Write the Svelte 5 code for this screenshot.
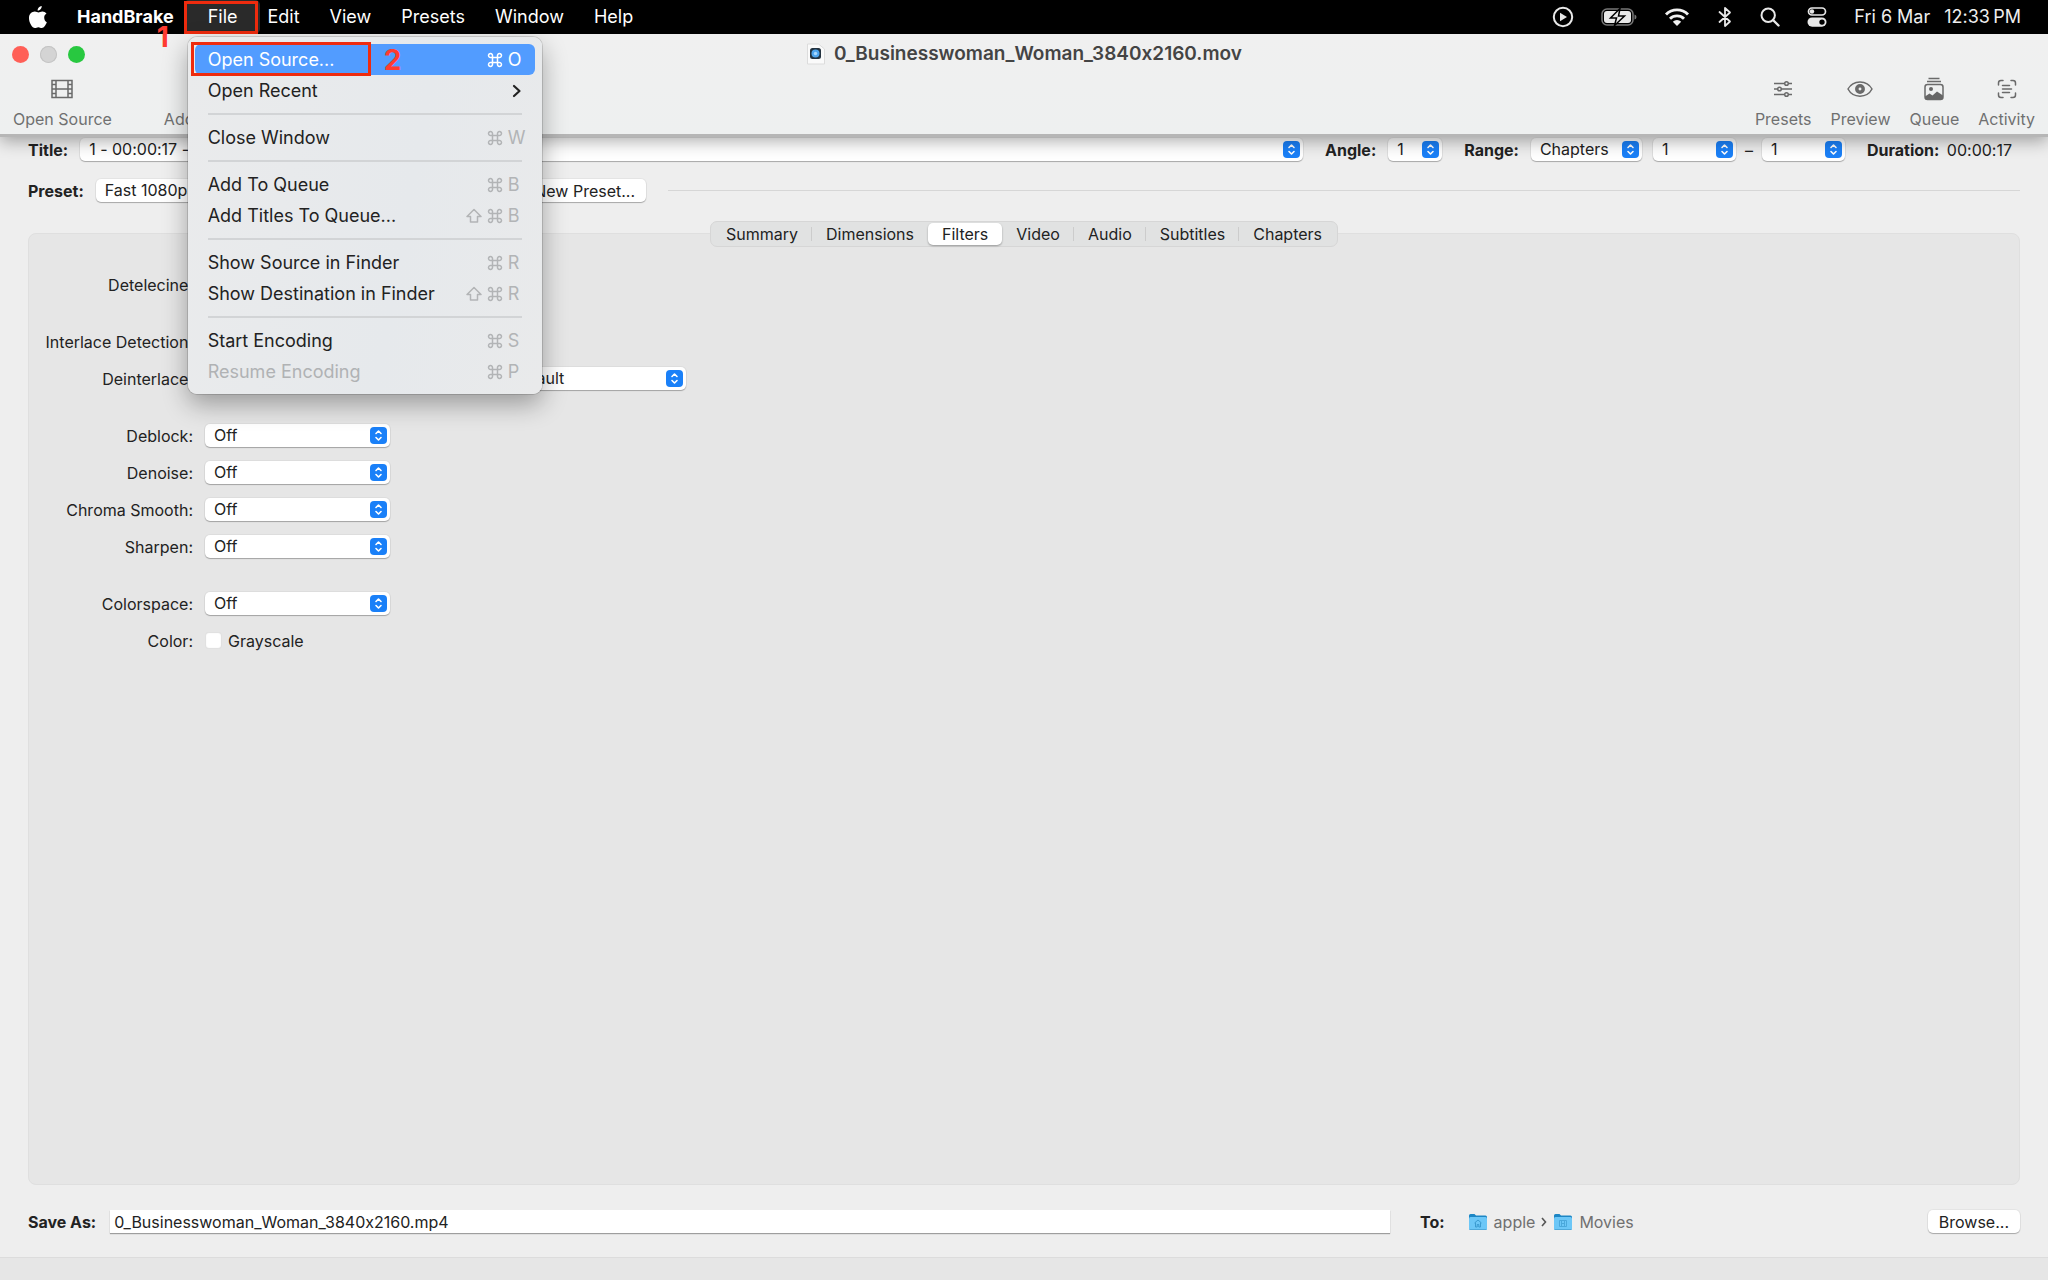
<script>
	const menus = ['Edit', 'View', 'Presets', 'Window', 'Help'];

	const fileMenu = [
		[
			{ label: 'Open Source...', key: 'O', active: true },
			{ label: 'Open Recent', submenu: true }
		],
		[{ label: 'Close Window', key: 'W' }],
		[
			{ label: 'Add To Queue', key: 'B' },
			{ label: 'Add Titles To Queue...', key: 'B', shift: true }
		],
		[
			{ label: 'Show Source in Finder', key: 'R' },
			{ label: 'Show Destination in Finder', key: 'R', shift: true }
		],
		[
			{ label: 'Start Encoding', key: 'S' },
			{ label: 'Resume Encoding', key: 'P', disabled: true }
		]
	];

	const filterGroups = [
		[{ id: 'detelecine', label: 'Detelecine:', value: 'Off' }],
		[
			{ id: 'interlace', label: 'Interlace Detection:', value: 'Off' },
			{ id: 'deinterlace', label: 'Deinterlace:', value: 'Yadif', preset: 'Default' }
		],
		[
			{ id: 'deblock', label: 'Deblock:', value: 'Off' },
			{ id: 'denoise', label: 'Denoise:', value: 'Off' },
			{ id: 'chroma', label: 'Chroma Smooth:', value: 'Off' },
			{ id: 'sharpen', label: 'Sharpen:', value: 'Off' }
		],
		[{ id: 'colorspace', label: 'Colorspace:', value: 'Off' }]
	];

	const tabs = ['Summary', 'Dimensions', 'Filters', 'Video', 'Audio', 'Subtitles', 'Chapters'];
	let activeTab = $state('Filters');
	let fileName = $state('0_Businesswoman_Woman_3840x2160.mp4');
	let grayscale = $state(false);
</script>

{#snippet command()}
	<svg class="glyph" viewBox="0 0 16 16" width="16" height="16">
		<path d="M5.5 5.5h5v5h-5zM5.5 5.5H3.7A2 2 0 1 1 5.5 3.7zM10.5 5.5V3.7a2 2 0 1 1 1.8 1.8zM10.5 10.5h1.8a2 2 0 1 1-1.8 1.8zM5.5 10.5v1.8a2 2 0 1 1-1.8-1.8z" />
	</svg>
{/snippet}

{#snippet folder(kind)}
	<svg width="20" height="18" viewBox="0 0 20 18">
		<path d="M1 2.5Q1 1 2.500 1H6.500L8 2.500H17.500Q19 2.500 19 4V8H1z" fill="#1d86c4" />
		<rect x="1" y="4" width="18" height="13" rx="1.500" fill="#6cc7f7" />
		<path d="M1.500 16.500h17" stroke="#4fa9da" />
		{#if kind === 'home'}
			<path d="M6.500 10L10 7l3.500 3M7.500 9.500V14h1.700v-2.500h1.600V14h1.700V9.500" fill="none" stroke="#3b9bd0" />
		{:else}
			<path d="M6.500 7.500h7v6h-7zM8.500 7.500v6M11.500 7.500v6M8.500 10.500h3" fill="none" stroke="#4aa8db" />
		{/if}
	</svg>
{/snippet}

<div class="screen">
	<nav class="menubar">
		<svg class="apple" width="20" height="24" viewBox="0 0 20 24">
			<path d="M13.700 1c.2 2.400-1.800 4.700-4 4.700C9.400 3.500 11.500 1.200 13.700 1zM16.200 12.600c0-2.100 1.200-3.300 2.300-4-1-1.500-2.600-2.100-4-2.200-1.700-.1-3.100 1-4 1-.8 0-2.200-.9-3.600-.9C3.700 6.600 1 8.900 1 13.200 1 17.800 4.200 23 6.900 23c1.300 0 1.900-.8 3.500-.8 1.500 0 2 .8 3.400.8 2.300 0 4.200-3.400 5-5.700-1.600-.7-2.600-2.400-2.600-4.700z" fill="#fff" />
		</svg>
		<button class="app-name">HandBrake</button>
		<div class="file">
			<button class="file-button">File</button>
			<div class="callout callout-file"></div>
			<span class="step step-one">1</span>

			<div class="dropdown" role="menu">
				{#each fileMenu as group, i}
					{#if i > 0}<hr />{/if}
					{#each group as item}
						<button class="item" class:active={item.active} disabled={item.disabled} role="menuitem">
							<span>{item.label}</span>
							{#if item.submenu}
								<svg class="chevron" width="10" height="14" viewBox="0 0 10 14">
									<path d="M2 2l5.500 5L2 12" fill="none" stroke="#222" stroke-width="2.200" stroke-linecap="round" stroke-linejoin="round" />
								</svg>
							{:else}
								<span class="keys">
									{#if item.shift}
										<svg class="glyph" viewBox="0 0 16 16" width="16" height="16">
											<path d="M8 1.500l7 7h-3.500V14h-7V8.500H1z" />
										</svg>
									{/if}
									{@render command()}
									<span class="letter">{item.key}</span>
								</span>
							{/if}
						</button>
					{/each}
				{/each}
				<div class="callout callout-open"></div>
				<span class="step step-two">2</span>
			</div>
		</div>
		{#each menus as menu}
			<button>{menu}</button>
		{/each}

		<div class="status">
			<svg width="22" height="22" viewBox="0 0 22 22">
				<circle cx="11" cy="11" r="9.200" fill="none" stroke="#e8e8e8" stroke-width="2" />
				<path d="M8 6.800v8.400l7-4.200z" fill="#e8e8e8" />
			</svg>
			<svg width="36" height="20" viewBox="0 0 36 20">
				<rect x="1" y="2" width="31" height="16" rx="5" fill="none" stroke="#777" stroke-width="1.500" />
				<rect x="3" y="4" width="27" height="12" rx="3" fill="#e8e8e8" />
				<path d="M33.500 7.500q2 .5 2 2.500t-2 2.500z" fill="#777" />
				<path d="M19 1.500L9.500 11h6L13.500 18.500 23.500 9h-6z" fill="#e8e8e8" stroke="#000" stroke-width="1.500" />
			</svg>
			<svg width="26" height="20" viewBox="0 0 26 20">
				<path d="M2 7.500a15.500 15.500 0 0 1 22 0M6 11.700a10 10 0 0 1 14 0" fill="none" stroke="#f0f0f0" stroke-width="2.900" />
				<path d="M8.800 14.700a6 6 0 0 1 8.400 0L13 19z" fill="#f0f0f0" />
			</svg>
			<svg width="16" height="22" viewBox="0 0 16 22">
				<path d="M2.500 6L13 15.500 8 20V2l5 4.500L2.500 16" fill="none" stroke="#e8e8e8" stroke-width="1.800" stroke-linejoin="round" stroke-linecap="round" />
			</svg>
			<svg width="20" height="20" viewBox="0 0 20 20">
				<circle cx="8.200" cy="8.200" r="6.700" fill="none" stroke="#e8e8e8" stroke-width="2" />
				<path d="M13 13l5.500 5.500" stroke="#e8e8e8" stroke-width="2.400" stroke-linecap="round" />
			</svg>
			<svg width="20" height="20" viewBox="0 0 20 20">
				<rect x="1.500" y="1" width="17" height="7" rx="3.500" fill="none" stroke="#e8e8e8" stroke-width="1.700" />
				<circle cx="5" cy="4.500" r="2.200" fill="#e8e8e8" />
				<rect x="0.500" y="10.500" width="19" height="9.200" rx="4.600" fill="#e8e8e8" />
				<circle cx="15" cy="15.100" r="2.700" fill="#000" />
			</svg>
			<time><span>Fri 6 Mar</span><span>12:33&thinsp;PM</span></time>
		</div>
	</nav>

	<header class="window-bar">
		<div class="titlebar">
			<div class="lights">
				<button class="light close" aria-label="Close"></button>
				<button class="light minimize" aria-label="Minimize"></button>
				<button class="light zoom" aria-label="Zoom"></button>
			</div>
			<h1>
				<svg width="20" height="22" viewBox="0 0 20 22">
					<path d="M1.500 1h11L18.500 6v15h-17z" fill="#fafafa" stroke="#dcdcdc" />
					<rect x="4" y="5" width="11" height="11" rx="2.500" fill="#23323f" />
					<circle cx="9.500" cy="10.500" r="4" fill="#4ea5ee" />
					<circle cx="9.500" cy="10.500" r="1.700" fill="#a7d8ff" />
				</svg>
				0_Businesswoman_Woman_3840x2160.mov
			</h1>
		</div>
		<div class="toolbar">
			<button class="tool">
				<svg width="22" height="20" viewBox="0 0 22 20">
					<path d="M1 1.500h20v17H1zM5 1.500v17M17 1.500v17M5 10h12M1 5.500h4M1 10h4M1 14.500h4M17 5.500h4M17 10h4M17 14.500h4" />
				</svg>
				Open Source
			</button>
			<button class="tool add">
				<svg width="22" height="20" viewBox="0 0 22 20"><path d="M2 3h18v14H2zM11 6v8M7 10h8" /></svg>
				Add To Queue
			</button>
			<div class="tools">
				<button class="tool">
					<svg width="20" height="20" viewBox="0 0 20 20">
						<path d="M1 4.500h10.500M15.500 4.500H19M1 10h3.500M8.500 10H19M1 15.500h10.500M15.500 15.500H19" stroke-width="1.600" />
						<circle cx="13.500" cy="4.500" r="1.800" /><circle cx="6.500" cy="10" r="1.800" /><circle cx="13.500" cy="15.500" r="1.800" />
					</svg>
					Presets
				</button>
				<button class="tool">
					<svg width="26" height="20" viewBox="0 0 26 20">
						<path d="M1 10C6 .5 20 .5 25 10 20 19.500 6 19.500 1 10z" />
						<circle class="pupil" cx="13" cy="10" r="3.200" />
					</svg>
					Preview
				</button>
				<button class="tool">
					<svg width="22" height="24" viewBox="0 0 22 24">
						<path d="M5.500 1.500h11M4 4.500h14" />
						<rect x="2" y="7.500" width="18" height="15" rx="2.500" />
						<circle class="solid" cx="8" cy="12" r="2" />
						<path class="solid" d="M2 19.500l4.500-3 3 2 4.500-4 6 4V21q0 1.500-2 1.500H4q-2 0-2-1.500z" />
					</svg>
					Queue
				</button>
				<button class="tool">
					<svg width="20" height="20" viewBox="0 0 20 20">
						<path d="M1.500 6V4Q1.500 1.500 4 1.500h2M14 1.500h2q2.500 0 2.500 2.500v2M18.500 14v2q0 2.500-2.500 2.500h-2M6 18.500H4Q1.500 18.500 1.500 16v-2M5.500 6.500h7M5.500 10h9M5.500 13.500h7" stroke-linecap="round" />
					</svg>
					Activity
				</button>
			</div>
		</div>
	</header>

	<main>
		<div class="row source">
			<label for="title">Title:</label>
			<select id="title" class="grow"><option>1 - 00:00:17 - 0_Businesswoman</option></select>
			<label class="spaced" for="angle">Angle:</label>
			<select id="angle" class="angle"><option>1</option></select>
			<label class="spaced" for="range">Range:</label>
			<select id="range" class="range"><option>Chapters</option></select>
			<select class="chapter" aria-label="First chapter"><option>1</option></select>
			<span class="dash">–</span>
			<select class="chapter" aria-label="Last chapter"><option>1</option></select>
			<p class="duration"><b>Duration:</b> 00:00:17</p>
		</div>

		<div class="row preset">
			<label for="preset">Preset:</label>
			<select id="preset" class="preset-select"><option>Fast 1080p30</option></select>
			<button class="push">Save New Preset...</button>
			<hr />
		</div>

		<div class="tabs" role="tablist">
			{#each tabs as tab}
				<button
					role="tab"
					class:selected={tab === activeTab}
					aria-selected={tab === activeTab}
					onclick={() => (activeTab = tab)}>{tab}</button
				>
			{/each}
		</div>

		<section class="panel">
			{#each filterGroups as group}
				<div class="group">
					{#each group as filter}
						<div class="filter">
							<label for={filter.id}>{filter.label}</label>
							<select id={filter.id}><option>{filter.value}</option></select>
							{#if filter.preset}
								<span class="sub">Preset:</span>
								<select aria-label="Deinterlace preset"><option>{filter.preset}</option></select>
							{/if}
						</div>
					{/each}
					{#if group[0].id === 'colorspace'}
						<div class="filter">
							<span>Color:</span>
							<label class="check"><input type="checkbox" bind:checked={grayscale} />Grayscale</label>
						</div>
					{/if}
				</div>
			{/each}
		</section>

		<div class="row save">
			<label for="save">Save As:</label>
			<input id="save" type="text" bind:value={fileName} />
			<div class="destination">
				<b>To:</b>
				<span class="path">
					{@render folder('home')}
					<span>apple</span>
					<svg width="6" height="10" viewBox="0 0 6 10"><path d="M1 1l3.500 4L1 9" fill="none" stroke="#555" stroke-width="1.600" /></svg>
					{@render folder('movies')}
					<span>Movies</span>
				</span>
				<button class="push">Browse...</button>
			</div>
		</div>
	</main>
	<footer></footer>
</div>

<style>
	:global(body) {
		margin: 0;
	}

	.screen {
		display: flex;
		flex-direction: column;
		min-height: 100vh;
		background: #eee;
		color: #222;
		font-family: Inter, 'Liberation Sans', sans-serif;
		font-size: 16px;
		/* keeps 3840x2160 from turning into a multiplication sign */
		font-feature-settings: 'calt' 0;
		line-height: 20px;
	}

	button,
	input,
	select {
		margin: 0;
		padding: 0;
		border: none;
		background: none;
		color: inherit;
		font: inherit;
		font-feature-settings: inherit;
	}
	button {
		white-space: nowrap;
	}
	svg {
		display: block;
		flex: none;
	}

	/* menu bar */
	.menubar {
		position: relative;
		z-index: 3;
		display: flex;
		align-items: center;
		height: 34px;
		padding: 0 27px 0 28px;
		background: #000;
		color: #fff;
		font-size: 18px;
	}
	.menubar > button {
		padding: 0 15px;
	}
	.menubar > .app-name {
		padding: 0 10px 0 29px;
		font-weight: 700;
	}
	.file {
		position: relative;
		height: 34px;
		margin-right: -7px;
	}
	.file-button {
		height: 34px;
		padding: 0 22px 0 24px;
		border-radius: 5px;
		background: #2a2a2a;
	}
	.callout {
		position: absolute;
		box-sizing: border-box;
		border: 3px solid #ee2b0e;
		pointer-events: none;
	}
	.callout-file {
		inset: 1px 2px 0 0;
	}
	.callout-open {
		top: 5px;
		left: 3px;
		width: 180px;
		height: 34px;
	}
	.step {
		position: absolute;
		color: #ff3b30;
		font-size: 28px;
		font-weight: 700;
		line-height: 28px;
	}
	.step-one {
		top: 23px;
		left: -27px;
	}
	.step-two {
		top: 9px;
		left: 196px;
	}

	.status {
		display: flex;
		align-items: center;
		gap: 27px;
		margin-left: auto;
		color: #eee;
	}
	.status time {
		display: flex;
		gap: 14px;
		white-space: nowrap;
	}

	.dropdown {
		position: absolute;
		top: 37px;
		left: 4px;
		box-sizing: border-box;
		width: 354px;
		padding: 7px;
		border-radius: 9px;
		background: linear-gradient(100deg, #eaebec, #e6e9ec 60%, #e9eaeb);
		box-shadow:
			0 0 0 1px #0002,
			0 10px 26px #0005;
		color: #222;
	}
	.dropdown hr {
		height: 2px;
		margin: 7px 13px;
		border: none;
		background: #d2d4d6;
	}
	.item {
		display: flex;
		align-items: center;
		justify-content: space-between;
		box-sizing: border-box;
		width: 100%;
		height: 31px;
		padding: 0 10px 0 13px;
		border-radius: 6px;
	}
	.item.active {
		background: #529cff;
		color: #fff;
	}
	.item:disabled {
		color: #b0b2b4;
	}
	.chevron {
		margin-right: 3px;
	}
	.keys {
		display: flex;
		align-items: center;
		gap: 5px;
		color: #b2b4b6;
	}
	.active .keys {
		color: #fff;
	}
	.letter {
		width: 17px;
		text-align: left;
	}
	.glyph {
		fill: none;
		stroke: currentColor;
		stroke-width: 1.5px;
		stroke-linejoin: round;
	}

	/* window chrome */
	.window-bar {
		position: relative;
		z-index: 2;
		height: 100px;
		border-bottom: 3px solid #b6b6b6;
		background: linear-gradient(#f0f0f0, #eef0f0);
		box-shadow: 0 4px 16px #0005;
	}
	.titlebar {
		display: grid;
		grid-template-columns: 1fr auto 1fr;
		align-items: center;
		height: 40px;
		padding: 0 12px;
	}
	.lights {
		display: flex;
		gap: 11px;
	}
	.light {
		width: 17px;
		height: 17px;
		border-radius: 50%;
	}
	.close {
		background: #ff5f57;
	}
	.minimize {
		background: #d4d4d4;
		box-shadow: inset 0 0 0 1px #c4c4c4;
	}
	.zoom {
		background: #28c840;
	}
	h1 {
		display: flex;
		align-items: center;
		gap: 8px;
		margin: 0;
		color: #444;
		font-size: 19px;
		font-weight: 600;
	}
	.toolbar {
		display: flex;
		height: 60px;
		padding: 0 13px;
		color: #707070;
	}
	.tool {
		display: grid;
		grid-template-rows: 30px 30px;
		place-items: center;
	}
	.tool svg {
		fill: none;
		stroke: #6a6a6a;
		stroke-width: 1.5px;
	}
	.tool .solid {
		fill: #666;
		stroke: none;
	}
	.tool .pupil {
		stroke-width: 3.5px;
	}
	.add {
		margin-left: 52px;
	}
	.tools {
		display: flex;
		gap: 19px;
		margin-left: auto;
	}

	/* window content */
	main {
		display: flex;
		flex: 1;
		flex-direction: column;
		padding: 0 28px;
	}
	.row {
		display: flex;
		align-items: center;
	}
	.row label,
	b {
		font-weight: 700;
	}

	select {
		box-sizing: border-box;
		width: 185px;
		height: 23px;
		padding: 0 24px 0 9px;
		border-radius: 5px;
		appearance: none;
		background: #fff
			url("data:image/svg+xml,%3Csvg xmlns='http://www.w3.org/2000/svg' width='17' height='17'%3E%3Crect width='17' height='17' rx='4' fill='%231a80f8'/%3E%3Cpath d='M6 6.500l2.500-2.500 2.500 2.500M6 10.500l2.500 2.500 2.500-2.500' fill='none' stroke='white' stroke-width='1.600' stroke-linecap='round' stroke-linejoin='round'/%3E%3C/svg%3E")
			no-repeat right 3px center;
		box-shadow:
			0 0 0 1px #0000000a,
			0 1px 1px #0004;
		line-height: 23px;
	}
	.push {
		box-sizing: border-box;
		height: 23px;
		padding: 0 11px;
		border-radius: 5px;
		background: #fff;
		box-shadow:
			0 0 0 1px #0000000a,
			0 1px 1px #0004;
	}

	.source {
		padding-top: 1px;
	}
	.source .grow {
		flex: 1;
		margin-left: 12px;
	}
	.spaced {
		margin-left: 22px;
	}
	.source .angle {
		width: 54px;
		margin-left: 12px;
	}
	.source .range {
		width: 111px;
		margin: 0 11px 0 12px;
	}
	.source .chapter {
		width: 83px;
	}
	.dash {
		width: 26px;
		text-align: center;
	}
	.duration {
		margin: 0 8px 0 22px;
	}
	.duration b {
		margin-right: 3px;
	}

	.preset {
		margin-top: 18px;
	}
	.preset .preset-select {
		width: 366px;
		margin: 0 20px 0 12px;
	}
	.preset hr {
		flex: 1;
		height: 1px;
		margin: 0 0 0 22px;
		border: none;
		background: #d6d6d6;
	}

	.tabs {
		z-index: 1;
		display: flex;
		align-self: center;
		box-sizing: border-box;
		height: 26px;
		margin: 19px 0 -14px;
		padding: 1px;
		border: 1px solid #d6d6d6;
		border-radius: 7px;
		background: #e1e2e2;
	}
	.tabs button {
		padding: 0 14px;
		background: linear-gradient(#ccc, #ccc) no-repeat right center / 1px 14px;
	}
	.tabs button:last-child,
	.tabs button:has(+ .selected) {
		background: none;
	}
	.tabs .selected {
		border-radius: 5px;
		background: #fff;
		box-shadow: 0 1px 2px #0005;
	}

	.panel {
		display: flex;
		flex: 1;
		flex-direction: column;
		gap: 20px;
		padding: 32px 0 0;
		border: 1px solid #dfdfdf;
		border-radius: 8px;
		background: #e6e6e6;
	}
	.filter {
		display: grid;
		grid-template-columns: 164px 185px 87px 185px;
		column-gap: 12px;
		align-items: center;
		height: 37px;
	}
	.filter > :first-child,
	.sub {
		text-align: right;
		white-space: nowrap;
	}
	.check {
		display: flex;
		align-items: center;
		gap: 6px;
	}
	.check input {
		width: 17px;
		height: 17px;
		border-radius: 4px;
		appearance: none;
		background: #fff;
		box-shadow: inset 0 0 1px 1px #0002;
	}
	.check input:checked {
		background: #1a80f8;
	}

	.save {
		padding: 25px 0 24px;
	}
	.save input {
		box-sizing: border-box;
		flex: 1;
		height: 23px;
		margin-left: 14px;
		padding: 0 4px;
		background: #fff;
		box-shadow: 0 1px 1px #0005;
	}
	.destination {
		display: flex;
		align-items: center;
		width: 600px;
		margin-left: 30px;
	}
	.path {
		display: flex;
		align-items: center;
		gap: 6px;
		margin: 0 auto 0 23px;
		color: #707070;
	}
	footer {
		height: 22px;
		border-top: 1px solid #dcdcdc;
		background: #e6e6e6;
	}
</style>
